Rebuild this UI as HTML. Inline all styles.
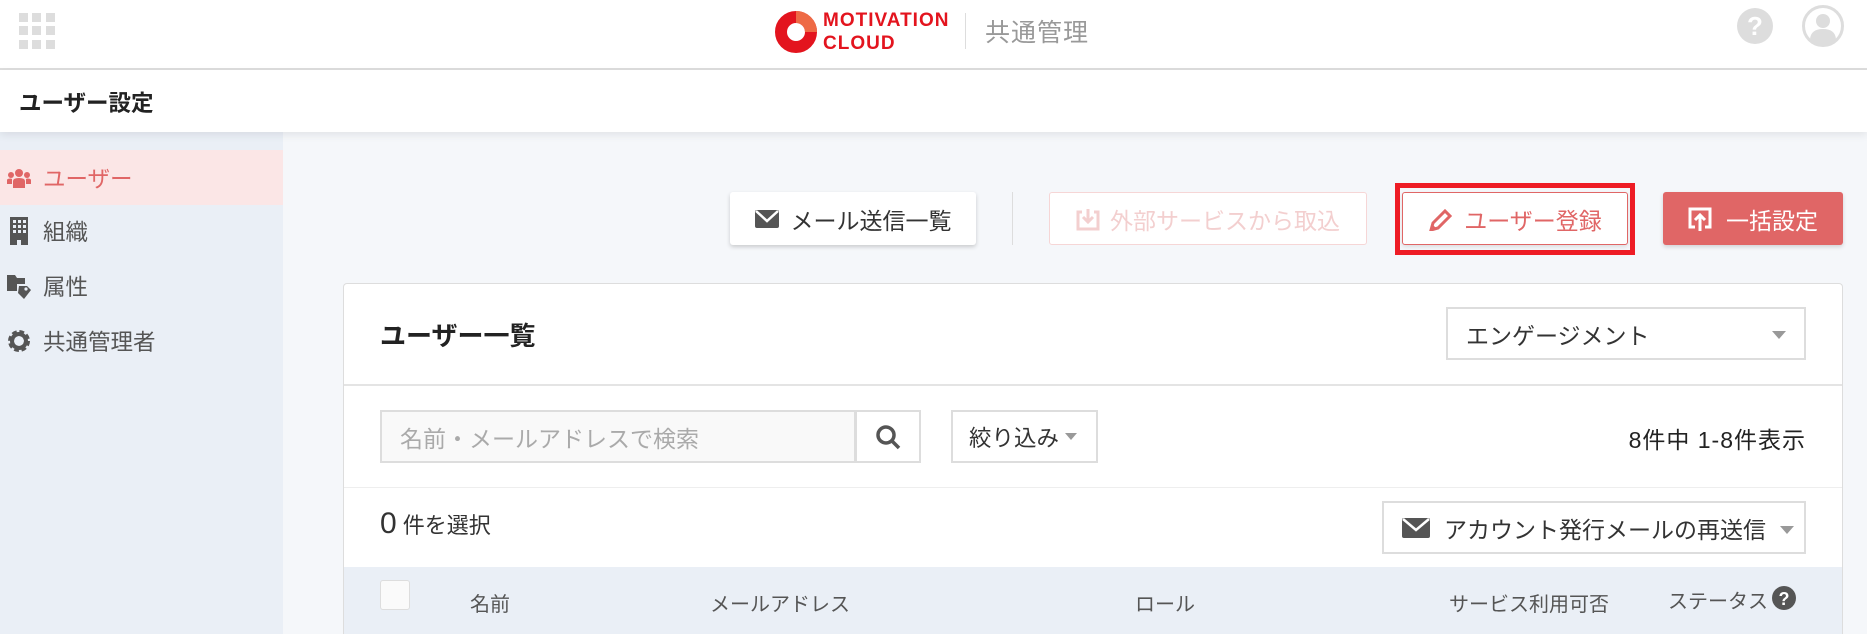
<!DOCTYPE html>
<html style="width:1867px;height:634px;overflow:hidden"><head><meta charset="utf-8"><style>
*{box-sizing:border-box;margin:0;padding:0}
body{width:1867px;height:634px;overflow:hidden;background:#f5f7fa;font-family:"Liberation Sans","Noto Sans CJK JP",sans-serif;position:relative;color:#333}
.abs{position:absolute}
.hdr{left:0;top:0;width:1867px;height:70px;background:#fff;border-bottom:2px solid #ddd}
.sub{left:0;top:70px;width:1867px;height:62px;background:#fff;box-shadow:0 3px 8px rgba(0,0,0,.08);z-index:2}
.side{left:0;top:132px;width:283px;height:502px;background:#eaeff6}
.item{left:0;width:283px;height:54px;display:flex;align-items:center;font-size:22.5px;color:#555}
.item svg{margin-left:7px;margin-right:12px}
.btn{height:53px;display:flex;align-items:center;justify-content:center;font-size:23px;border-radius:3px}
.card{left:343px;top:283px;width:1500px;height:351px;background:#fff;border:1px solid #ddd;border-bottom:none;border-radius:4px 4px 0 0}
.box{border:2px solid #ddd;background:#fff;display:flex;align-items:center;font-size:23px}
.caret{width:0;height:0;border-left:7px solid transparent;border-right:7px solid transparent;border-top:8px solid #999}
</style></head><body>
<div class="abs hdr"></div>
<svg class="abs" style="left:19px;top:13px" width="36" height="36" fill="#ddd">
<rect x="0" y="0" width="9" height="9"/><rect x="13" y="0" width="9" height="9"/><rect x="27" y="0" width="9" height="9"/>
<rect x="0" y="13" width="9" height="9"/><rect x="13" y="13" width="9" height="9"/><rect x="27" y="13" width="9" height="9"/>
<rect x="0" y="27" width="9" height="9"/><rect x="13" y="27" width="9" height="9"/><rect x="27" y="27" width="9" height="9"/></svg>
<svg class="abs" style="left:774px;top:10px" width="44" height="44"><circle cx="22" cy="22" r="15" fill="none" stroke="#e3141e" stroke-width="12"/><path d="M22 7 A15 15 0 0 1 37 22" fill="none" stroke="#ee6a45" stroke-width="12"/></svg>
<div class="abs" style="left:823px;top:9px;font-size:19px;font-weight:bold;color:#e3141e;line-height:23px;letter-spacing:1px">MOTIVATION<br>CLOUD</div>
<div class="abs" style="left:965px;top:13px;width:1px;height:36px;background:#ddd"></div>
<div class="abs" style="left:985px;top:13px;font-size:25px;color:#999;letter-spacing:1px">共通管理</div>
<svg class="abs" style="left:1736px;top:7px" width="38" height="38"><circle cx="19" cy="19" r="18" fill="#ddd"/><text x="19" y="28" text-anchor="middle" font-size="26" font-weight="bold" fill="#fff" font-family="Liberation Sans">?</text></svg>
<svg class="abs" style="left:1801px;top:4px" width="44" height="44"><circle cx="22" cy="22" r="19.5" fill="#fff" stroke="#ddd" stroke-width="3"/><circle cx="22" cy="17" r="7" fill="#ddd"/><path d="M9 35 Q10 25 22 25 Q34 25 35 35 Q29 41 22 41 Q15 41 9 35Z" fill="#ddd"/></svg>
<div class="abs sub"><div class="abs" style="left:19px;top:16px;font-size:22.5px;font-weight:bold;color:#222">ユーザー設定</div></div>
<div class="abs side"></div>
<div class="abs item" style="top:150px;height:55px;background:#fbe6e6;color:#e06666"><svg width="24" height="20" viewBox="0 0 24 20" fill="#e06666"><circle cx="12" cy="5" r="4"/><circle cx="4" cy="7" r="3"/><circle cx="20" cy="7" r="3"/><path d="M6 20V13Q6 10 12 10Q18 10 18 13V20Z"/><path d="M0 16V12Q0 10.5 4 10.5L5 11V16Z"/><path d="M24 16V12Q24 10.5 20 10.5L19 11V16Z"/></svg>ユーザー</div>
<div class="abs item" style="top:204px"><svg width="24" height="28" viewBox="0 0 20 28" fill="#555"><path d="M1 0H19V28H12V23H8V28H1Z"/><g fill="#eaeff6"><rect x="4" y="3" width="3" height="3"/><rect x="9" y="3" width="3" height="3"/><rect x="14" y="3" width="3" height="3"/><rect x="4" y="8" width="3" height="3"/><rect x="9" y="8" width="3" height="3"/><rect x="14" y="8" width="3" height="3"/><rect x="4" y="13" width="3" height="3"/><rect x="9" y="13" width="3" height="3"/><rect x="14" y="13" width="3" height="3"/></g></svg>組織</div>
<div class="abs item" style="top:259px"><svg width="24" height="26" viewBox="0 0 24 26" fill="#555"><path d="M0 2H8L10 5H18V11H10V18H0Z"/><path d="M12 13H20L24 17 17 26 11 20Z"/><circle cx="19" cy="16" r="1.6" fill="#eaeff6"/></svg>属性</div>
<div class="abs item" style="top:314px"><svg width="24" height="24" viewBox="0 0 24 24"><circle cx="12" cy="12" r="8" fill="none" stroke="#555" stroke-width="6" stroke-dasharray="4 2.3"/><circle cx="12" cy="12" r="7" fill="none" stroke="#555" stroke-width="4"/></svg>共通管理者</div>

<div class="abs btn" style="left:730px;top:192px;width:246px;background:#fff;box-shadow:0 2px 4px rgba(0,0,0,.18);color:#333"><svg width="24" height="18" style="margin-right:12px"><rect width="24" height="18" rx="2" fill="#555"/><path d="M1 1L12 11 23 1" stroke="#fff" stroke-width="2.5" fill="none"/></svg>メール送信一覧</div>
<div class="abs" style="left:1012px;top:192px;width:1px;height:53px;background:#ddd"></div>
<div class="abs btn" style="left:1049px;top:192px;width:318px;background:#fff;border:1px solid #f6d6d6;color:#f3cfcf"><svg width="24" height="24" style="margin-right:10px" fill="none" stroke="#f3cfcf" stroke-width="3"><path d="M6 5H2V22H22V5H18M12 2V15M7 10L12 15 17 10"/></svg>外部サービスから取込</div>
<div class="abs" style="left:1395px;top:183px;width:240px;height:72px;border:5px solid #ee1c25"></div>
<div class="abs btn" style="left:1402px;top:192px;width:226px;background:#fff;border:1px solid #e06666;color:#e06666;box-shadow:0 2px 4px rgba(0,0,0,.1)"><svg width="24" height="24" style="margin-right:12px" viewBox="0 0 24 24"><path d="M3 23L5 16 17 4 22 9 10 21Z" fill="none" stroke="#e06666" stroke-width="3"/><path d="M2 24L4 17 9 22Z" fill="#e06666"/></svg>ユーザー登録</div>
<div class="abs btn" style="left:1663px;top:192px;width:180px;background:#e06666;color:#fff;box-shadow:0 2px 4px rgba(0,0,0,.15)"><svg width="24" height="24" style="margin-right:14px" fill="none" stroke="#fff" stroke-width="3"><path d="M7 2H22V20H17M7 20H2V2H7M12 24V9M7 13L12 8 17 13"/></svg>一括設定</div>

<div class="abs card"></div>
<div class="abs" style="left:380px;top:316px;font-size:26px;font-weight:bold;color:#222">ユーザー一覧</div>
<div class="abs box" style="left:1446px;top:307px;width:360px;height:53px;padding-left:18px;color:#333">エンゲージメント<div class="caret abs" style="right:18px;top:22px"></div></div>
<div class="abs" style="left:344px;top:384px;width:1498px;height:2px;background:#e4e4e4"></div>
<div class="abs box" style="left:380px;top:410px;width:476px;height:53px;padding-left:18px;background:#f9f9f9;color:#aaa">名前・メールアドレスで検索</div>
<div class="abs box" style="left:855px;top:410px;width:66px;height:53px;justify-content:center"><svg width="26" height="26" fill="none" stroke="#555" stroke-width="3.5"><circle cx="11" cy="11" r="8"/><path d="M17 17L24 24"/></svg></div>
<div class="abs box" style="left:951px;top:410px;width:147px;height:53px;padding-left:16px;color:#333;font-size:22.5px">絞り込み<div class="caret" style="margin-left:6px;border-width:7px 6px 0"></div></div>
<div class="abs" style="right:61px;top:421px;font-size:23px;color:#222;letter-spacing:1px">8件中 1-8件表示</div>
<div class="abs" style="left:344px;top:487px;width:1498px;height:1px;background:#eee"></div>
<div class="abs" style="left:380px;top:507px;font-size:22px;color:#333"><span style="font-size:30px">0</span> 件を選択</div>
<div class="abs box" style="left:1382px;top:501px;width:424px;height:53px;padding-left:18px;color:#333"><svg width="28" height="20" style="margin-right:14px"><rect width="28" height="20" rx="2" fill="#555"/><path d="M1 1L14 12 27 1" stroke="#fff" stroke-width="2.5" fill="none"/></svg>アカウント発行メールの再送信<div class="caret abs" style="right:10px;top:23px"></div></div>
<div class="abs" style="left:344px;top:567px;width:1498px;height:67px;background:#eaeff6"></div>
<div class="abs" style="left:380px;top:580px;width:30px;height:30px;background:#fafafa;border:1px solid #ddd;border-radius:3px"></div>
<div class="abs" style="top:588px;left:470px;font-size:20px;color:#555">名前</div>
<div class="abs" style="top:588px;left:710px;font-size:20px;color:#555">メールアドレス</div>
<div class="abs" style="top:588px;left:1135px;font-size:20px;color:#555">ロール</div>
<div class="abs" style="top:588px;left:1449px;font-size:20px;color:#555">サービス利用可否</div>
<div class="abs" style="top:585px;left:1668px;font-size:20px;color:#555">ステータス</div>
<svg class="abs" style="left:1772px;top:586px" width="24" height="24"><circle cx="12" cy="12" r="12" fill="#555"/><text x="12" y="19" text-anchor="middle" font-size="18" font-weight="bold" fill="#fff" font-family="Liberation Sans">?</text></svg>
</body></html>
